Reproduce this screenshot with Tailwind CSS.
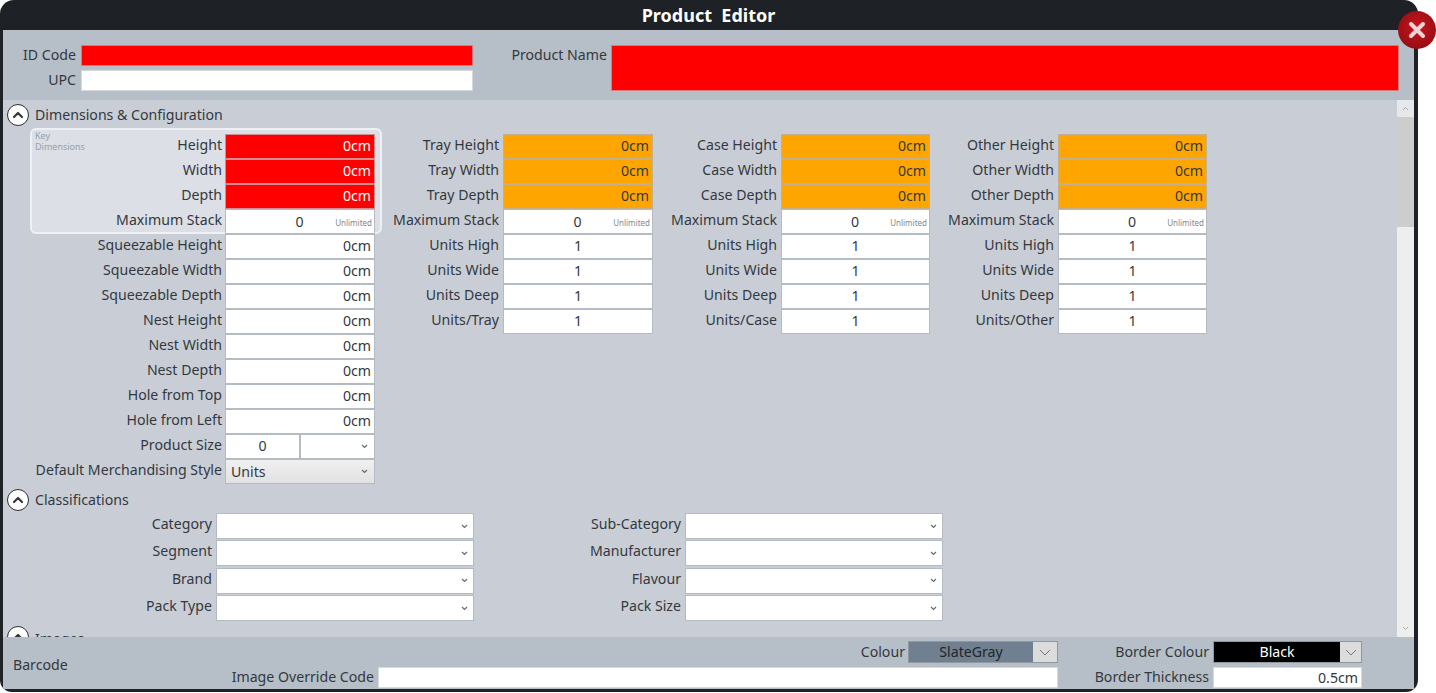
<!DOCTYPE html>
<html>
<head>
<meta charset="utf-8">
<title>Product Editor</title>
<script src="https://cdn.jsdelivr.net/npm/@tailwindcss/browser@4"></script>
</head>
<body class="bg-white overflow-hidden font-['Noto_Sans',sans-serif] text-[14.15px] leading-[22px] text-[#33383e]">
<div class="relative w-[1436px] h-[693px]">
  <!-- window -->
  <div class="w-[1418px] h-[692px] bg-[#1e2126] rounded-t-[14px] rounded-b-[12px] pl-[3px] pr-[4px] pb-[3px] flex flex-col overflow-hidden">
    <div class="h-[30px] shrink-0 flex items-center justify-center text-white font-bold text-[18px] whitespace-pre">Product  Editor</div>

    <!-- top fields -->
    <div class="h-[70px] shrink-0 bg-[#b6bfc7] flex pt-[15px] leading-[20px]">
      <div class="flex flex-col w-[470px]">
        <div class="flex h-[25px]">
          <div class="w-[73px] text-right mr-[5px] whitespace-nowrap">ID Code</div>
          <div class="w-[392px] h-[21px] bg-[#ff0000] border border-[#d9797c]"></div>
        </div>
        <div class="flex h-[25px]">
          <div class="w-[73px] text-right mr-[5px] whitespace-nowrap">UPC</div>
          <div class="w-[392px] h-[21px] bg-white border border-[#d5dade]"></div>
        </div>
      </div>
      <div class="w-[134px] text-right mr-[4px] whitespace-nowrap">Product Name</div>
      <div class="w-[788px] h-[46px] bg-[#ff0000] border border-[#d9797c]"></div>
    </div>

    <!-- scrolling body -->
    <div class="flex-1 min-h-0 bg-[#c9ced6] flex">
      <div class="flex-1 overflow-hidden relative">
        <div class="absolute left-[27px] top-[28px] w-[352px] h-[106px] bg-[#dcdfe5] border-2 border-[#eef0f3] rounded-[6px] pl-[3px] text-[9px] leading-[11px] text-[#98a1ab]">Key<br>Dimensions</div>

        <div class="flex items-center h-[24px] mt-[3px] pl-[4px] relative">
          <div class="w-[22px] h-[22px] rounded-full bg-white border-[1.5px] border-[#2b2e33] flex items-center justify-center mr-[6px]">
            <svg width="12" height="8" viewBox="0 0 12 8" fill="none" stroke="#33383e" stroke-width="2.2" stroke-linecap="round" stroke-linejoin="round"><path d="M2 6l4-4 4 4"/></svg>
          </div>
          <span>Dimensions &amp; Configuration</span>
        </div>

        <div class="flex mt-[7px] relative">
          <!-- column 1 -->
          <div class="flex flex-col">
            <div class="flex h-[25px]"><div class="w-[219px] mr-[3px] text-right whitespace-nowrap">Height</div><div class="w-[150px] bg-[#ff0000] border border-[#cf8f92] pr-[3px] text-right text-white">0cm</div></div>
            <div class="flex h-[25px]"><div class="w-[219px] mr-[3px] text-right whitespace-nowrap">Width</div><div class="w-[150px] bg-[#ff0000] border border-[#cf8f92] pr-[3px] text-right text-white">0cm</div></div>
            <div class="flex h-[25px]"><div class="w-[219px] mr-[3px] text-right whitespace-nowrap">Depth</div><div class="w-[150px] bg-[#ff0000] border border-[#cf8f92] pr-[3px] text-right text-white">0cm</div></div>
            <div class="flex h-[25px]"><div class="w-[219px] mr-[3px] text-right whitespace-nowrap">Maximum Stack</div><div class="w-[150px] bg-white border border-[#b4bbc3] flex items-center pr-[2px]"><span class="flex-1 text-center">0</span><span class="text-[8px] leading-none text-[#82878d] ml-[-38px] pt-[3px]">Unlimited</span></div></div>
            <div class="flex h-[25px]"><div class="w-[219px] mr-[3px] text-right whitespace-nowrap">Squeezable Height</div><div class="w-[150px] bg-white border border-[#b4bbc3] pr-[3px] text-right">0cm</div></div>
            <div class="flex h-[25px]"><div class="w-[219px] mr-[3px] text-right whitespace-nowrap">Squeezable Width</div><div class="w-[150px] bg-white border border-[#b4bbc3] pr-[3px] text-right">0cm</div></div>
            <div class="flex h-[25px]"><div class="w-[219px] mr-[3px] text-right whitespace-nowrap">Squeezable Depth</div><div class="w-[150px] bg-white border border-[#b4bbc3] pr-[3px] text-right">0cm</div></div>
            <div class="flex h-[25px]"><div class="w-[219px] mr-[3px] text-right whitespace-nowrap">Nest Height</div><div class="w-[150px] bg-white border border-[#b4bbc3] pr-[3px] text-right">0cm</div></div>
            <div class="flex h-[25px]"><div class="w-[219px] mr-[3px] text-right whitespace-nowrap">Nest Width</div><div class="w-[150px] bg-white border border-[#b4bbc3] pr-[3px] text-right">0cm</div></div>
            <div class="flex h-[25px]"><div class="w-[219px] mr-[3px] text-right whitespace-nowrap">Nest Depth</div><div class="w-[150px] bg-white border border-[#b4bbc3] pr-[3px] text-right">0cm</div></div>
            <div class="flex h-[25px]"><div class="w-[219px] mr-[3px] text-right whitespace-nowrap">Hole from Top</div><div class="w-[150px] bg-white border border-[#b4bbc3] pr-[3px] text-right">0cm</div></div>
            <div class="flex h-[25px]"><div class="w-[219px] mr-[3px] text-right whitespace-nowrap">Hole from Left</div><div class="w-[150px] bg-white border border-[#b4bbc3] pr-[3px] text-right">0cm</div></div>
            <div class="flex h-[25px]"><div class="w-[219px] mr-[3px] text-right whitespace-nowrap">Product Size</div>
              <div class="w-[75px] bg-white border border-[#b4bbc3] text-center">0</div>
              <div class="w-[75px] bg-white border border-[#b4bbc3] flex items-center justify-end pr-[6px]"><svg width="7" height="5" viewBox="0 0 7 5" fill="none" stroke="#666b70" stroke-width="1.2"><path d="M1 1l2.5 2.5L6 1"/></svg></div>
            </div>
            <div class="flex h-[25px]"><div class="w-[219px] mr-[3px] text-right whitespace-nowrap">Default Merchandising Style</div>
              <div class="w-[150px] bg-[linear-gradient(#f0f0f0,#e2e2e2)] border border-[#b4bbc3] flex items-center justify-between pl-[5px] pr-[6px]"><span class="pt-[1px]">Units</span><svg width="7" height="5" viewBox="0 0 7 5" fill="none" stroke="#666b70" stroke-width="1.2"><path d="M1 1l2.5 2.5L6 1"/></svg></div>
            </div>
          </div>

          <!-- column 2 -->
          <div class="flex flex-col">
            <div class="flex h-[25px]"><div class="w-[124px] mr-[4px] text-right whitespace-nowrap">Tray Height</div><div class="w-[150px] bg-[#ffa500] border border-[#c4b08c] pr-[3px] text-right">0cm</div></div>
            <div class="flex h-[25px]"><div class="w-[124px] mr-[4px] text-right whitespace-nowrap">Tray Width</div><div class="w-[150px] bg-[#ffa500] border border-[#c4b08c] pr-[3px] text-right">0cm</div></div>
            <div class="flex h-[25px]"><div class="w-[124px] mr-[4px] text-right whitespace-nowrap">Tray Depth</div><div class="w-[150px] bg-[#ffa500] border border-[#c4b08c] pr-[3px] text-right">0cm</div></div>
            <div class="flex h-[25px]"><div class="w-[124px] mr-[4px] text-right whitespace-nowrap">Maximum Stack</div><div class="w-[150px] bg-white border border-[#b4bbc3] flex items-center pr-[2px]"><span class="flex-1 text-center">0</span><span class="text-[8px] leading-none text-[#82878d] ml-[-38px] pt-[3px]">Unlimited</span></div></div>
            <div class="flex h-[25px]"><div class="w-[124px] mr-[4px] text-right whitespace-nowrap">Units High</div><div class="w-[150px] bg-white border border-[#b4bbc3] text-center">1</div></div>
            <div class="flex h-[25px]"><div class="w-[124px] mr-[4px] text-right whitespace-nowrap">Units Wide</div><div class="w-[150px] bg-white border border-[#b4bbc3] text-center">1</div></div>
            <div class="flex h-[25px]"><div class="w-[124px] mr-[4px] text-right whitespace-nowrap">Units Deep</div><div class="w-[150px] bg-white border border-[#b4bbc3] text-center">1</div></div>
            <div class="flex h-[25px]"><div class="w-[124px] mr-[4px] text-right whitespace-nowrap">Units/Tray</div><div class="w-[150px] bg-white border border-[#b4bbc3] text-center">1</div></div>
          </div>

          <!-- column 3 -->
          <div class="flex flex-col">
            <div class="flex h-[25px]"><div class="w-[124px] mr-[4px] text-right whitespace-nowrap">Case Height</div><div class="w-[149px] bg-[#ffa500] border border-[#c4b08c] pr-[3px] text-right">0cm</div></div>
            <div class="flex h-[25px]"><div class="w-[124px] mr-[4px] text-right whitespace-nowrap">Case Width</div><div class="w-[149px] bg-[#ffa500] border border-[#c4b08c] pr-[3px] text-right">0cm</div></div>
            <div class="flex h-[25px]"><div class="w-[124px] mr-[4px] text-right whitespace-nowrap">Case Depth</div><div class="w-[149px] bg-[#ffa500] border border-[#c4b08c] pr-[3px] text-right">0cm</div></div>
            <div class="flex h-[25px]"><div class="w-[124px] mr-[4px] text-right whitespace-nowrap">Maximum Stack</div><div class="w-[149px] bg-white border border-[#b4bbc3] flex items-center pr-[2px]"><span class="flex-1 text-center">0</span><span class="text-[8px] leading-none text-[#82878d] ml-[-38px] pt-[3px]">Unlimited</span></div></div>
            <div class="flex h-[25px]"><div class="w-[124px] mr-[4px] text-right whitespace-nowrap">Units High</div><div class="w-[149px] bg-white border border-[#b4bbc3] text-center">1</div></div>
            <div class="flex h-[25px]"><div class="w-[124px] mr-[4px] text-right whitespace-nowrap">Units Wide</div><div class="w-[149px] bg-white border border-[#b4bbc3] text-center">1</div></div>
            <div class="flex h-[25px]"><div class="w-[124px] mr-[4px] text-right whitespace-nowrap">Units Deep</div><div class="w-[149px] bg-white border border-[#b4bbc3] text-center">1</div></div>
            <div class="flex h-[25px]"><div class="w-[124px] mr-[4px] text-right whitespace-nowrap">Units/Case</div><div class="w-[149px] bg-white border border-[#b4bbc3] text-center">1</div></div>
          </div>

          <!-- column 4 -->
          <div class="flex flex-col">
            <div class="flex h-[25px]"><div class="w-[124px] mr-[4px] text-right whitespace-nowrap">Other Height</div><div class="w-[149px] bg-[#ffa500] border border-[#c4b08c] pr-[3px] text-right">0cm</div></div>
            <div class="flex h-[25px]"><div class="w-[124px] mr-[4px] text-right whitespace-nowrap">Other Width</div><div class="w-[149px] bg-[#ffa500] border border-[#c4b08c] pr-[3px] text-right">0cm</div></div>
            <div class="flex h-[25px]"><div class="w-[124px] mr-[4px] text-right whitespace-nowrap">Other Depth</div><div class="w-[149px] bg-[#ffa500] border border-[#c4b08c] pr-[3px] text-right">0cm</div></div>
            <div class="flex h-[25px]"><div class="w-[124px] mr-[4px] text-right whitespace-nowrap">Maximum Stack</div><div class="w-[149px] bg-white border border-[#b4bbc3] flex items-center pr-[2px]"><span class="flex-1 text-center">0</span><span class="text-[8px] leading-none text-[#82878d] ml-[-38px] pt-[3px]">Unlimited</span></div></div>
            <div class="flex h-[25px]"><div class="w-[124px] mr-[4px] text-right whitespace-nowrap">Units High</div><div class="w-[149px] bg-white border border-[#b4bbc3] text-center">1</div></div>
            <div class="flex h-[25px]"><div class="w-[124px] mr-[4px] text-right whitespace-nowrap">Units Wide</div><div class="w-[149px] bg-white border border-[#b4bbc3] text-center">1</div></div>
            <div class="flex h-[25px]"><div class="w-[124px] mr-[4px] text-right whitespace-nowrap">Units Deep</div><div class="w-[149px] bg-white border border-[#b4bbc3] text-center">1</div></div>
            <div class="flex h-[25px]"><div class="w-[124px] mr-[4px] text-right whitespace-nowrap">Units/Other</div><div class="w-[149px] bg-white border border-[#b4bbc3] text-center">1</div></div>
          </div>
        </div>

        <!-- classifications -->
        <div class="flex items-center h-[24px] mt-[4px] pl-[4px]">
          <div class="w-[22px] h-[22px] rounded-full bg-white border-[1.5px] border-[#2b2e33] flex items-center justify-center mr-[6px]">
            <svg width="12" height="8" viewBox="0 0 12 8" fill="none" stroke="#33383e" stroke-width="2.2" stroke-linecap="round" stroke-linejoin="round"><path d="M2 6l4-4 4 4"/></svg>
          </div>
          <span>Classifications</span>
        </div>
        <div class="grid grid-cols-[209px_258px_203px_258px] gap-y-[1.4px] gap-x-[4px] mt-[1px] w-[940px]">
          <div class="text-right">Category</div><div class="h-[26px] bg-white border border-[#b4bbc3] flex items-center justify-end pr-[5px]"><svg width="7" height="5" viewBox="0 0 7 5" fill="none" stroke="#666b70" stroke-width="1.2"><path d="M1 1l2.5 2.5L6 1"/></svg></div>
          <div class="text-right">Sub-Category</div><div class="h-[26px] bg-white border border-[#b4bbc3] flex items-center justify-end pr-[5px]"><svg width="7" height="5" viewBox="0 0 7 5" fill="none" stroke="#666b70" stroke-width="1.2"><path d="M1 1l2.5 2.5L6 1"/></svg></div>
          <div class="text-right">Segment</div><div class="h-[26px] bg-white border border-[#b4bbc3] flex items-center justify-end pr-[5px]"><svg width="7" height="5" viewBox="0 0 7 5" fill="none" stroke="#666b70" stroke-width="1.2"><path d="M1 1l2.5 2.5L6 1"/></svg></div>
          <div class="text-right">Manufacturer</div><div class="h-[26px] bg-white border border-[#b4bbc3] flex items-center justify-end pr-[5px]"><svg width="7" height="5" viewBox="0 0 7 5" fill="none" stroke="#666b70" stroke-width="1.2"><path d="M1 1l2.5 2.5L6 1"/></svg></div>
          <div class="text-right">Brand</div><div class="h-[26px] bg-white border border-[#b4bbc3] flex items-center justify-end pr-[5px]"><svg width="7" height="5" viewBox="0 0 7 5" fill="none" stroke="#666b70" stroke-width="1.2"><path d="M1 1l2.5 2.5L6 1"/></svg></div>
          <div class="text-right">Flavour</div><div class="h-[26px] bg-white border border-[#b4bbc3] flex items-center justify-end pr-[5px]"><svg width="7" height="5" viewBox="0 0 7 5" fill="none" stroke="#666b70" stroke-width="1.2"><path d="M1 1l2.5 2.5L6 1"/></svg></div>
          <div class="text-right">Pack Type</div><div class="h-[26px] bg-white border border-[#b4bbc3] flex items-center justify-end pr-[5px]"><svg width="7" height="5" viewBox="0 0 7 5" fill="none" stroke="#666b70" stroke-width="1.2"><path d="M1 1l2.5 2.5L6 1"/></svg></div>
          <div class="text-right">Pack Size</div><div class="h-[26px] bg-white border border-[#b4bbc3] flex items-center justify-end pr-[5px]"><svg width="7" height="5" viewBox="0 0 7 5" fill="none" stroke="#666b70" stroke-width="1.2"><path d="M1 1l2.5 2.5L6 1"/></svg></div>
        </div>
        <div class="flex items-center h-[24px] mt-[4px] pl-[4px]">
          <div class="w-[22px] h-[22px] rounded-full bg-white border-[1.5px] border-[#2b2e33] flex items-center justify-center mr-[6px]">
            <svg width="12" height="8" viewBox="0 0 12 8" fill="none" stroke="#33383e" stroke-width="2.2" stroke-linecap="round" stroke-linejoin="round"><path d="M2 6l4-4 4 4"/></svg>
          </div>
          <span class="pt-[3px]">Images</span>
        </div>
      </div>

      <!-- scrollbar -->
      <div class="w-[17px] shrink-0 flex flex-col bg-[#eeeeee]">
        <div class="h-[17px] bg-[#e6e8eb] flex items-center justify-center"><svg width="7" height="5" viewBox="0 0 7 5" fill="none" stroke="#a9a9a9" stroke-width="1"><path d="M1 4l2.5-2.5L6 4"/></svg></div>
        <div class="h-[110px] bg-[#cdcdcd]"></div>
        <div class="flex-1"></div>
        <div class="h-[17px] flex items-center justify-center"><svg width="7" height="5" viewBox="0 0 7 5" fill="none" stroke="#a9a9a9" stroke-width="1"><path d="M1 1l2.5 2.5L6 1"/></svg></div>
      </div>
    </div>

    <!-- footer -->
    <div class="h-[52px] shrink-0 bg-[#b6bfc7] flex">
      <div class="w-[110px] pl-[10px] shrink-0 self-center mt-[4px]">Barcode</div>
      <div class="flex flex-col pt-[4px]">
        <div class="flex h-[26px]">
          <div class="w-[792px] mr-[3px] text-right whitespace-nowrap">Colour</div>
          <div class="w-[150px] h-[22px] bg-[#708090] border border-[#8f979f] flex leading-[20px]">
            <div class="flex-1 text-center text-[#20252a]">SlateGray</div>
            <div class="w-[24px] bg-[#dcdcdc] flex items-center justify-center"><svg width="12" height="7" viewBox="0 0 12 7" fill="none" stroke="#777" stroke-width="1"><path d="M1 1l5 5 5-5"/></svg></div>
          </div>
          <div class="w-[151px] mr-[4px] text-right whitespace-nowrap">Border Colour</div>
          <div class="w-[149px] h-[22px] bg-black border border-[#8f979f] flex leading-[20px]">
            <div class="flex-1 text-center text-white">Black</div>
            <div class="w-[21px] bg-[#dcdcdc] flex items-center justify-center"><svg width="12" height="7" viewBox="0 0 12 7" fill="none" stroke="#777" stroke-width="1"><path d="M1 1l5 5 5-5"/></svg></div>
          </div>
        </div>
        <div class="flex h-[21px] leading-[20px]">
          <div class="w-[261px] mr-[4px] text-right whitespace-nowrap">Image Override Code</div>
          <div class="w-[680px] h-[21px] bg-white border border-[#d5dade]"></div>
          <div class="w-[151px] mr-[4px] text-right whitespace-nowrap">Border Thickness</div>
          <div class="w-[149px] h-[21px] bg-white border border-[#d5dade] pr-[3px] text-right">0.5cm</div>
        </div>
      </div>
    </div>
  </div>

  <!-- close button -->
  <div class="absolute left-[1398px] top-[11px] w-[38px] h-[38px] rounded-full bg-[radial-gradient(circle_at_50%_42%,#c8161e,#860a10)] flex items-center justify-center">
    <svg width="20" height="20" viewBox="0 0 20 20" fill="none" stroke="#f3d3d3" stroke-width="4" stroke-linecap="round"><path d="M4 4l12 12M16 4L4 16"/></svg>
  </div>
</div>
</body>
</html>
